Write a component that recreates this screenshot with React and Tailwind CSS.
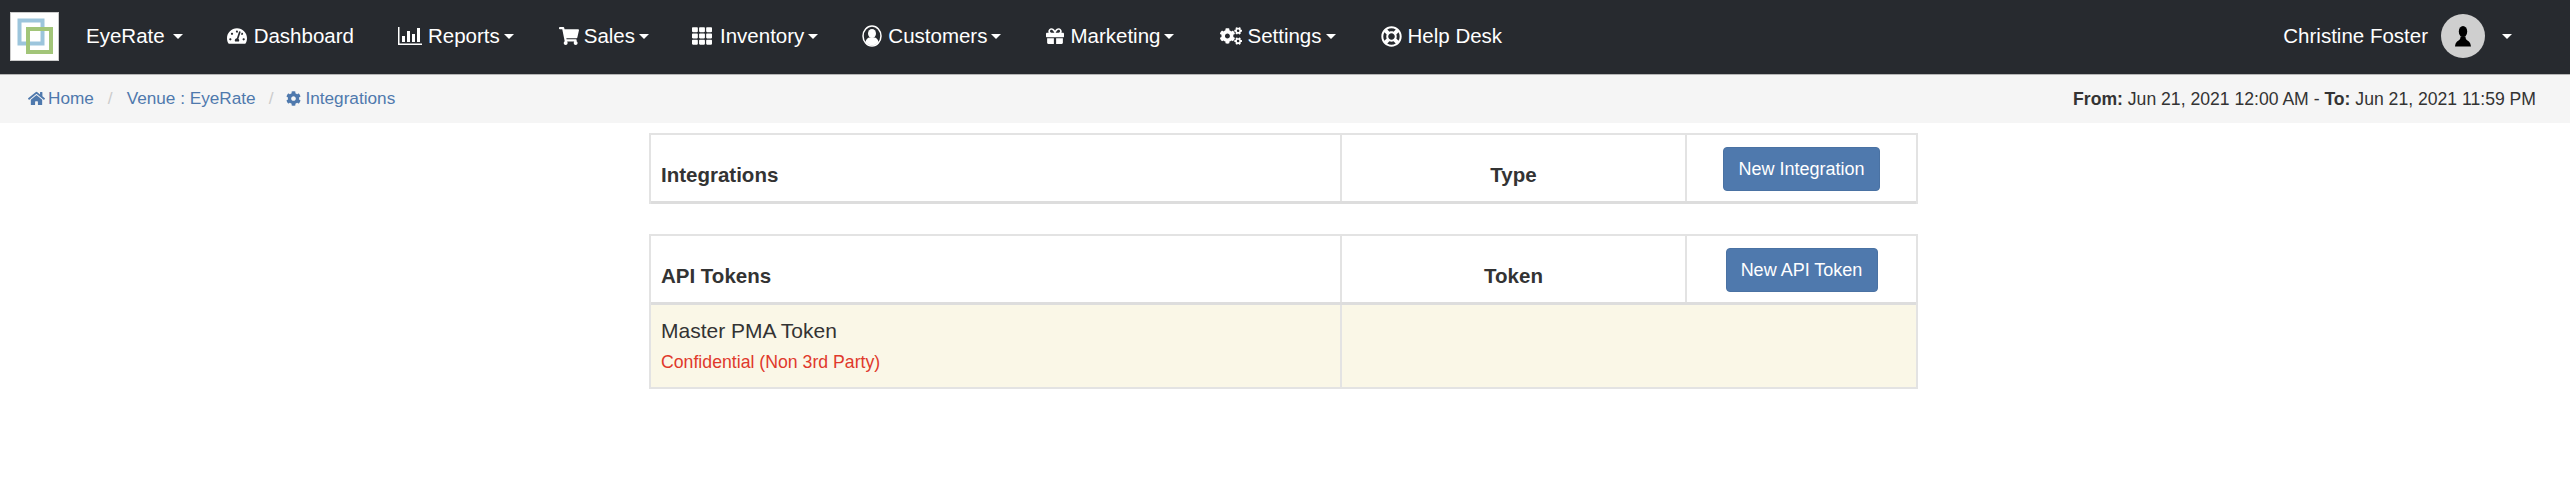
import { FaTachometerAlt, FaShoppingCart, FaTh, FaGift, FaCogs, FaHome, FaCog, FaRegLifeRing } from "react-icons/fa"

function Caret({ className = "" }) {
  return <span className={`inline-block w-0 h-0 border-x-[5px] border-x-transparent border-t-[5px] border-t-white ${className}`} />
}

function BarsIcon() {
  return (
    <svg width="24" height="20" viewBox="0 0 24 20" fill="white">
      <path d="M0 1h1.5v16.5H24V19H0z" />
      <rect x="4" y="10" width="3" height="6" />
      <rect x="9" y="5" width="3" height="11" />
      <rect x="14" y="8" width="3" height="8" />
      <rect x="19" y="2" width="3" height="14" />
    </svg>
  )
}

function UserCircleIcon() {
  return (
    <svg width="20" height="22" viewBox="0 0 20 22" fill="white">
      <ellipse cx="10" cy="11" rx="9" ry="10" fill="none" stroke="white" strokeWidth="1.5" />
      <ellipse cx="10" cy="8.5" rx="4" ry="4.5" />
      <path d="M3.5 17c.5-3 2.5-4.5 4-4.5h5c1.500 0 3.500 1.500 4 4.500-1.500 2-4 3.500-6.500 3.500s-5-1.500-6.500-3.500z" />
    </svg>
  )
}

function PersonIcon() {
  return (
    <svg width="16" height="21" viewBox="0 0 16 21" fill="black">
      <ellipse cx="8" cy="5.500" rx="4.200" ry="5.500" />
      <path d="M5.500 10.500h5c0 2 .5 3 2 4s3 2 3.500 6H0c.5-4 2-5 3.500-6s2-2 2-4z" />
    </svg>
  )
}

function Logo() {
  return (
    <div className="w-[49px] h-[49px] bg-white border border-[#ccc] flex-none">
      <svg width="47" height="47" viewBox="0 0 47 47" fill="none">
        <rect x="8.500" y="7.500" width="23" height="23" stroke="#9cc5dc" strokeWidth="4" />
        <rect x="17" y="16" width="23" height="23" stroke="#a2c579" strokeWidth="4" />
      </svg>
    </div>
  )
}

const navItems = [
  { label: "Dashboard", icon: <FaTachometerAlt size={20} />, ml: "ml-[44px]", gap: "mr-[7px]" },
  { label: "Reports", icon: <BarsIcon />, caret: true, ml: "ml-[44px]", gap: "mr-[6px]" },
  { label: "Sales", icon: <FaShoppingCart size={20} />, caret: true, ml: "ml-[45px]", gap: "mr-[5px]" },
  { label: "Inventory", icon: <FaTh size={20} />, caret: true, ml: "ml-[43px]", gap: "mr-[8px]" },
  { label: "Customers", icon: <UserCircleIcon />, caret: true, ml: "ml-[44px]", gap: "mr-[6px]" },
  { label: "Marketing", icon: <FaGift size={18} />, caret: true, ml: "ml-[45px]", gap: "mr-[6px]" },
  { label: "Settings", icon: <FaCogs size={22} />, caret: true, ml: "ml-[46px]", gap: "mr-[5px]" },
  { label: "Help Desk", icon: <FaRegLifeRing size={21} />, ml: "ml-[45px]", gap: "mr-[6px]" },
]

function TableHead({ title, col, button, btnWidth }) {
  return (
    <div className="flex h-[69px] border-b-[3px] border-[#ddd]">
      <div className="w-[691px] border-r-2 border-[#e3e3e3] flex items-end pb-[10px] pl-[10px] font-bold text-[20.5px] text-[#333]">{title}</div>
      <div className="w-[345px] border-r-2 border-[#e3e3e3] flex items-end justify-center pb-[10px] font-bold text-[20.5px] text-[#333]">{col}</div>
      <div className="flex-1 flex justify-center pt-[12px]">
        <button className={`${btnWidth} h-[44px] bg-[#4f79ad] border border-[#4a72a3] rounded-[4px] text-white text-[18px]`}>{button}</button>
      </div>
    </div>
  )
}

export default function App() {
  return (
    <div className="w-[2570px] h-[504px] bg-white font-['Liberation_Sans',Arial,sans-serif]">
      <nav className="h-[75px] bg-[#272a2f] border-b border-[#b5b5b5] flex items-center pl-[10px] pb-[2px] text-white text-[20.5px]">
        <Logo />
        <span className="ml-[27px]">EyeRate</span>
        <Caret className="ml-[8px]" />
        {navItems.map(item => (
          <div key={item.label} className={`flex items-center ${item.ml}`}>
            <span className={item.gap}>{item.icon}</span>
            <span>{item.label}</span>
            {item.caret && <Caret className="ml-[4px]" />}
          </div>
        ))}
        <div className="ml-auto flex items-center pr-[58px]">
          <span>Christine Foster</span>
          <div className="ml-[13px] w-[44px] h-[44px] rounded-full bg-[#cfcfcf] flex items-center justify-center">
            <PersonIcon />
          </div>
          <Caret className="ml-[17px]" />
        </div>
      </nav>

      <div className="h-[48px] bg-[#f5f5f5] flex items-center justify-between pl-[28px] pr-[34px] text-[17.2px]">
        <div className="flex items-center text-[#4f79ad]">
          <FaHome size={17} />
          <span className="ml-[3px]">Home</span>
          <span className="mx-[14px] text-[#ccc]">/</span>
          <span>Venue : EyeRate</span>
          <span className="mx-[13px] text-[#ccc]">/</span>
          <FaCog size={15} />
          <span className="ml-[4px]">Integrations</span>
        </div>
        <div className="text-[17.6px] text-[#333]">
          <b>From:</b> Jun 21, 2021 12:00 AM - <b>To:</b> Jun 21, 2021 11:59 PM
        </div>
      </div>

      <div className="w-[1269px] ml-[649px] pt-[10px]">
        <div className="border-2 border-b-0 border-[#e3e3e3]">
          <TableHead title="Integrations" col="Type" button="New Integration" btnWidth="w-[157px]" />
        </div>
        <div className="mt-[30px] border-2 border-[#e3e3e3]">
          <TableHead title="API Tokens" col="Token" button="New API Token" btnWidth="w-[152px]" />
          <div className="flex h-[82px] bg-[#faf7e7]">
            <div className="w-[691px] border-r-2 border-[#e3e3e3] pl-[10px] pt-[12px]">
              <div className="text-[21px] leading-[28px] text-[#333]">Master PMA Token</div>
              <div className="text-[17.7px] leading-[24px] mt-[5px] text-[#e0392b]">Confidential (Non 3rd Party)</div>
            </div>
          </div>
        </div>
      </div>
    </div>
  )
}
